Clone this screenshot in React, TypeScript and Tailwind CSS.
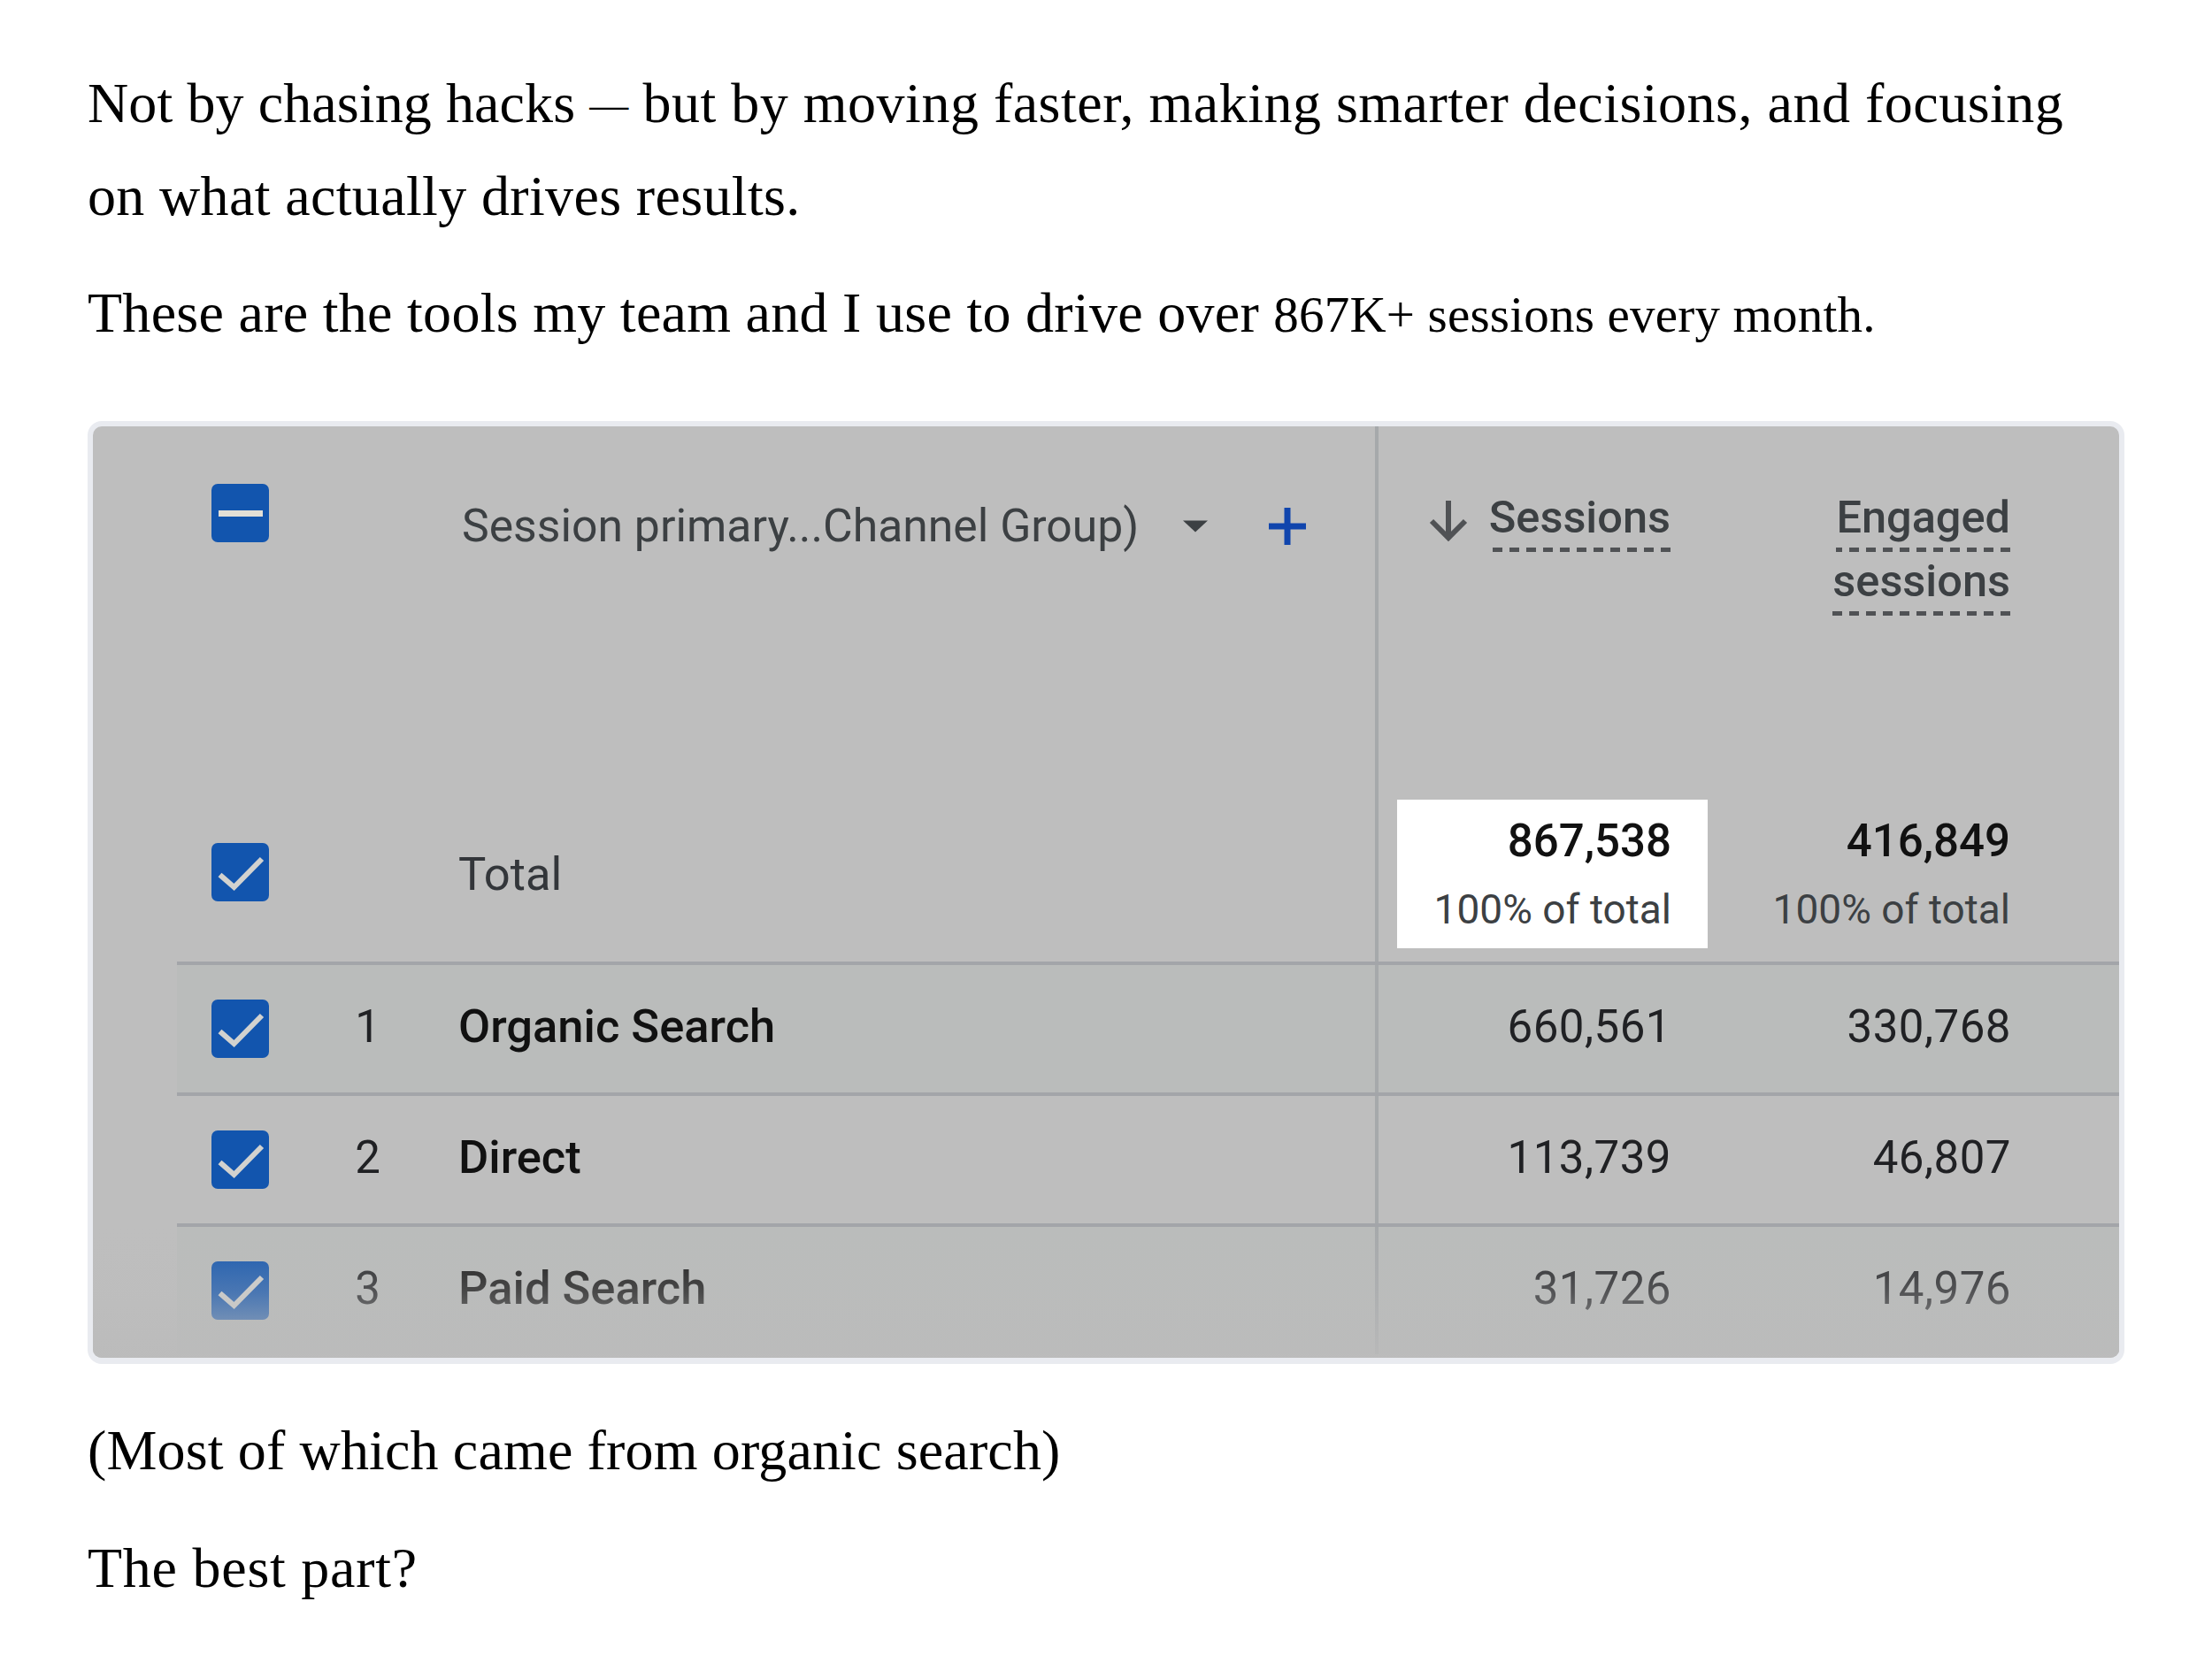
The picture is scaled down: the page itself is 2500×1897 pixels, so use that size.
function Box({ kind }: { kind: "check" | "minus" }) {
  return (
    <div className="flex h-[66px] w-[65px] shrink-0 items-center justify-center rounded-[7px] bg-[#1255ae]">
      {kind === "minus" ? (
        <div className="h-[7px] w-[50px] bg-[#e2dfd6]" />
      ) : (
        <svg viewBox="0 0 65 66" className="h-[66px] w-[65px]">
          <path d="M9.5 36 L25.5 50 L57 18" fill="none" stroke="#d2d2cf" strokeWidth="6" />
        </svg>
      )}
    </div>
  );
}

function DataRow({ n, label, a, b, bg }: { n: string; label: string; a: string; b: string; bg: string }) {
  return (
    <div className={`ml-[95px] flex h-[148px] border-t-[4px] border-[#a3a5a9] ${bg}`}>
      <div className="flex w-[1358px] items-center border-r-[4px] border-[#a6a9ab]">
        <div className="ml-[39px]">
          <Box kind="check" />
        </div>
        <div className="w-[214px] pb-[5px] pr-[88px] text-right text-[51px] font-normal text-[#202124]">{n}</div>
        <div className="pb-[5px] text-[52.5px] font-medium text-[#111]">{label}</div>
      </div>
      <div className="w-[331px] self-center pb-[5px] text-right text-[51px] tracking-[0.5px] text-[#202124]">{a}</div>
      <div className="w-[384px] self-center pb-[5px] text-right text-[51px] tracking-[0.5px] text-[#202124]">{b}</div>
    </div>
  );
}

function Dotted({ children }: { children: string }) {
  return (
    <span className="flex h-[72px] justify-end whitespace-nowrap">
      <span className="block pl-[4px]">
        <span className="block h-[67px] leading-[66px]">{children}</span>
        <span className="block h-[5px] bg-[repeating-linear-gradient(270deg,#505255_0_11px,transparent_11px_19px)]" />
      </span>
    </span>
  );
}

export default function App() {
  return (
    <div className="min-h-[1897px] w-[2500px] overflow-hidden bg-white pl-[99px] pt-[64px] font-['Liberation_Serif',serif] text-[64px] leading-[105px] tracking-[0.1px] text-black">
      <p className="whitespace-nowrap">
        Not by chasing hacks <span className="align-[5px] text-[44px] leading-none">—</span>{" "}
        <span className="tracking-[0.5px]">but by moving faster, making smarter decisions, and focusing</span>
        <br />
        <span className="tracking-[0.35px]">on what actually drives results.</span>
      </p>
      <p className="mt-[27px] whitespace-nowrap tracking-[0.28px]">
        These are the tools my team and I use to drive over <span className="text-[57px] leading-none tracking-[0.2px]">867K+ sessions every month.</span>
      </p>

      <div className="relative mt-[70px] h-[1066px] w-[2302px] overflow-hidden rounded-[16px] border-x-[6px] border-t-[6px] border-b-[7px] border-[#e9ebf0] bg-[#bebebe] font-['Roboto',sans-serif] tracking-normal">
        {/* header row */}
        <div className="flex h-[418px]">
          <div className="flex w-[1453px] items-start border-r-[4px] border-[#a6a9ab]">
            <div className="ml-[134px] mt-[65px]">
              <Box kind="minus" />
            </div>
            <div className="ml-[218px] mt-[78px] flex items-center text-[51.7px] leading-[70px] text-[#3c4043]">
              <span className="w-[815px] whitespace-nowrap">Session primary...Channel Group)</span>
              <svg viewBox="0 0 30 14" className="h-[14px] w-[28px]">
                <path d="M0 0 H30 L15 14 Z" fill="#3c4043" />
              </svg>
              <svg viewBox="0 0 42 42" className="ml-[69px] h-[42px] w-[42px]">
                <path d="M21 0 V42 M0 21 H42" fill="none" stroke="#1045ad" strokeWidth="7" />
              </svg>
            </div>
          </div>
          <div className="relative flex w-[330px] justify-end pt-[70px] text-[50.5px] font-medium text-[#3c4043]">
            <div className="flex items-start">
              <svg viewBox="0 0 44 46" className="mr-[20px] mt-[14px] h-[46px] w-[44px]">
                <path d="M22 0 V42 M3 23 L22 42 L41 23" fill="none" stroke="#505255" strokeWidth="6" />
              </svg>
              <Dotted>Sessions</Dotted>
            </div>
          </div>
          <div className="flex w-[384px] justify-end pt-[70px] text-right text-[50.5px] font-medium text-[#3c4043]">
            <div>
              <Dotted>Engaged</Dotted>
              <Dotted>sessions</Dotted>
            </div>
          </div>
        </div>

        {/* total row */}
        <div className="flex h-[187px]">
          <div className="flex w-[1453px] items-center border-r-[4px] border-[#a6a9ab]">
            <div className="mb-[16px] ml-[134px]">
              <Box kind="check" />
            </div>
            <div className="ml-[214px] pb-[10px] text-[52.5px] text-[#33363a]">Total</div>
          </div>
          <div className="ml-[21px] mt-[4px] flex h-[168px] w-[351px] flex-col items-end bg-white pr-[41px]">
            <div className="mt-[15px] text-[51px] font-medium leading-[64px] text-[#111]">867,538</div>
            <div className="mt-[15px] text-[46px] leading-[60px] text-[#3c4043]">100% of total</div>
          </div>
          <div className="mt-[4px] flex h-[168px] w-[342px] flex-col items-end">
            <div className="mt-[15px] text-[51px] font-medium leading-[64px] text-[#111]">416,849</div>
            <div className="mt-[15px] text-[46px] leading-[60px] text-[#3c4043]">100% of total</div>
          </div>
        </div>

        <DataRow n="1" label="Organic Search" a="660,561" b="330,768" bg="bg-[#babcbb]" />
        <DataRow n="2" label="Direct" a="113,739" b="46,807" bg="bg-[#bebebe]" />
        <DataRow n="3" label="Paid Search" a="31,726" b="14,976" bg="bg-[#babcbb]" />

        {/* fade over the last row */}
        <div className="absolute bottom-0 left-0 right-0 h-[146px] bg-gradient-to-b from-[#bebebe00] via-[#bcbcbc55] to-[#bbbbbbe0]" />
      </div>

      <p className="mt-[45px] whitespace-nowrap tracking-[0.15px]">(Most of which came from organic search)</p>
      <p className="mt-[28px] whitespace-nowrap tracking-[0.75px]">The best part?</p>
    </div>
  );
}
